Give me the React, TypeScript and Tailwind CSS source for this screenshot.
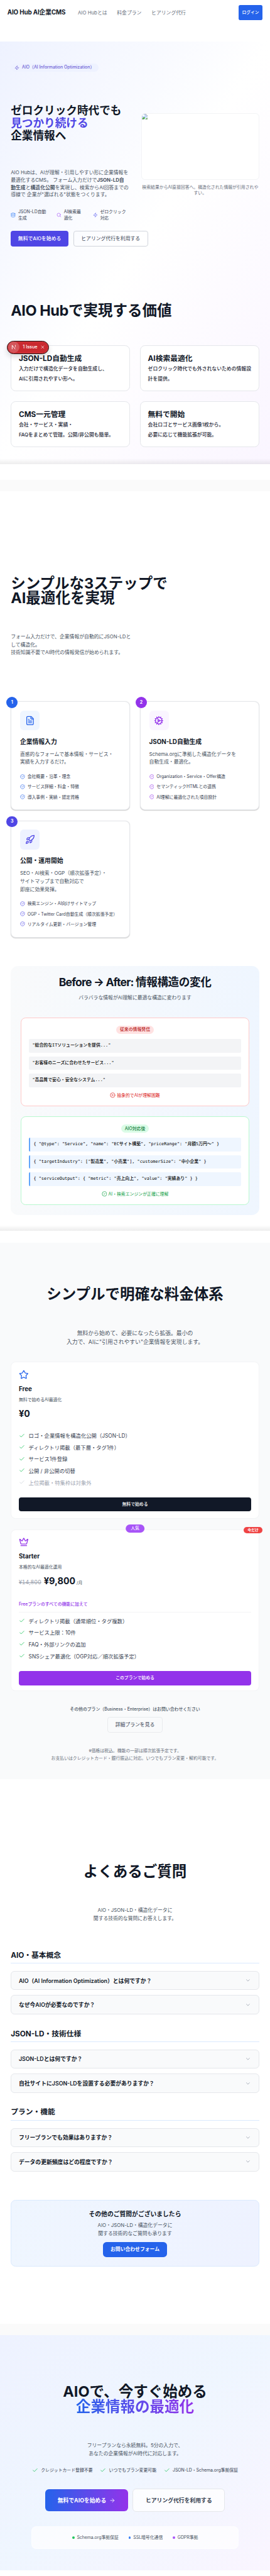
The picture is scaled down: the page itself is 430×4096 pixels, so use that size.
import type { ReactNode } from "react";
import {
  ArrowRight,
  Check,
  ChevronDown,
  CircleCheck,
  CircleCheckBig,
  CircleX,
  Cog,
  Crown,
  Database,
  FileText,
  Rocket,
  Search,
  Star,
  X,
  Zap,
} from "lucide-react";

// The site's palette, set once on the page root.
const palette = [
  "[--color-blue-400:#60a5fa] [--color-blue-500:#3b82f6] [--color-blue-600:#2563eb]",
  "[--color-indigo-500:#6366f1] [--color-indigo-600:#4f46e5]",
  "[--color-purple-500:#a855f7] [--color-purple-600:#9333ea]",
  "[--color-red-500:#ef4444] [--color-red-600:#dc2626] [--color-red-700:#b91c1c]",
  "[--color-green-500:#22c55e] [--color-green-600:#16a34a] [--color-green-700:#15803d]",
  "[--color-gray-400:#9ca3af] [--color-gray-500:#6b7280] [--color-gray-600:#4b5563]",
  "[--color-gray-700:#374151] [--color-gray-800:#1f2937] [--color-gray-900:#111827]",
].join(" ");

function Header() {
  return (
    <header className="flex h-[72px] items-center justify-between px-[21px]">
      <div className="flex items-center gap-[35px]">
        <span className="text-[17.5px] leading-7 font-bold tracking-[-0.2px] text-gray-900">AIO Hub AI企業CMS</span>
        <nav className="flex gap-8 pt-[1px] text-[14px] leading-5 text-gray-500">
          <a>AIO Hubとは</a>
          <a>料金プラン</a>
          <a>ヒアリング代行</a>
        </nav>
      </div>
      <button className="h-[44px] w-[69px] rounded-[5px] bg-blue-600 text-[12px] font-medium text-white">
        ログイン
      </button>
    </header>
  );
}

function BrokenImage() {
  return (
    <svg width="16" height="16" viewBox="0 0 16 16" className="block">
      <path d="M0.5 0.5H11L15.5 5V15.5H0.5Z" fill="#c3d7fb" />
      <path d="M2 6.5a1.7 1.7 0 0 1 .6-3.2 2 2 0 0 1 3.8 0A1.7 1.7 0 0 1 7 6.5Z" fill="#fff" />
      <path d="M1 15.5V14l5-5.5 3 3-4 4Z" fill="#4fae33" />
      <path d="M15.5 8 7.5 15.5h2L15.5 10.5Z" fill="#fff" />
      <path d="M9.5 15.5 15.5 10.5v5Z" fill="#4fae33" />
      <path d="M0.5 15.5V0.5H11L15.5 5v3M15.5 11v4.5H10M7 15.5H0.5" fill="none" stroke="#9aa0a6" />
      <path d="M11 0.5V5h4.5Z" fill="#fff" stroke="#9aa0a6" strokeWidth=".8" />
    </svg>
  );
}

const values: { title: string; lines: string[] }[] = [
  { title: "JSON-LD自動生成", lines: ["入力だけで構造化データを自動生成し、", "AIに引用されやすい形へ。"] },
  { title: "AI検索最適化", lines: ["ゼロクリック時代でも外されないための情報設", "計を提供。"] },
  { title: "CMS一元管理", lines: ["会社・サービス・実績・", "FAQをまとめて管理。公開/非公開も簡単。"] },
  { title: "無料で開始", lines: ["会社ロゴとサービス画像1枚から。", "必要に応じて機能拡張が可能。"] },
];

function IssueBadge() {
  return (
    <div className="absolute top-[849px] left-[19px] z-10 flex h-[38px] w-[120px] items-center rounded-full border border-[#1a0b0c] bg-[#ca2a30] pl-[2px] shadow-[inset_0_0_0_1px_#e5484d,0_8px_16px_rgba(0,0,0,0.14)]">
      <span className="flex size-[32px] items-center justify-center rounded-full bg-[#d4555a]">
        <svg width="14" height="14" viewBox="0 0 14 14" fill="none" strokeWidth="1.7">
          <defs>
            <linearGradient id="n-leg" x1="0" y1="0" x2="0" y2="1">
              <stop offset="0.3" stopColor="#fff" />
              <stop offset="1" stopColor="#fff" stopOpacity="0" />
            </linearGradient>
          </defs>
          <path d="M2.4 13V1.6L11.2 13" stroke="#fff" />
          <rect x="10.6" y="1" width="1.6" height="9" fill="url(#n-leg)" />
        </svg>
      </span>
      <span className="ml-[10px] text-[13px] leading-5 font-medium text-white">1 Issue</span>
      <X className="ml-[7px] size-[14px] text-white" strokeWidth={2} />
    </div>
  );
}

function Hero() {
  return (
    <section className="relative h-[1199px] bg-linear-to-br/srgb from-indigo-50 via-white to-purple-50 px-[4%] pt-[62px]">
      <div className="flex h-[24px] w-[249px] items-center gap-[8px] rounded-full bg-indigo-50 pl-[10px] text-[12.25px] font-medium whitespace-nowrap text-[#6d5fd6]">
        <Zap className="size-[14px] shrink-0" />
        <span>AIO（AI Information Optimization）</span>
      </div>

      <div className="mt-[93px] grid grid-cols-2 gap-[35px]">
        <div className="whitespace-nowrap">
          <h1 className="text-[31.5px] leading-[35.2px] font-bold text-gray-900">
            ゼロクリック時代でも
            <br />
            <span className="text-indigo-600">見つかり続ける</span>
            <br />
            企業情報へ
          </h1>
          <p className="mt-[78px] text-[14px] leading-[21px] text-gray-600">
            AIO Hubは、AIが理解・引用しやすい形に企業情報を
            <br />
            最適化するCMS。 フォーム入力だけで<strong>JSON-LD自</strong>
            <br />
            <strong>動生成</strong>と<strong>構造化公開</strong>を実現し、検索からAI回答までの
            <br />
            導線で 企業が"選ばれる"状態をつくります。
          </p>
          <div className="mt-[28px] flex h-[36px] text-[12.25px] leading-[18px] text-gray-700">
            <div className="flex w-[130px] items-center gap-[7px]">
              <Database className="size-[14px] text-blue-500" />
              <span>
                JSON-LD自動
                <br />
                生成
              </span>
            </div>
            <div className="flex w-[103px] items-center gap-[7px]">
              <Search className="size-[14px] text-purple-500" />
              <span>
                AI検索最
                <br />
                適化
              </span>
            </div>
            <div className="flex items-center gap-[7px]">
              <Zap className="size-[14px] text-indigo-500" />
              <span>
                ゼロクリック
                <br />
                対応
              </span>
            </div>
          </div>
          <div className="mt-[27px] flex gap-[14px] text-[14px]">
            <button className="h-[44px] w-[164px] shrink-0 rounded-[7px] bg-indigo-600 font-medium text-white">
              無料でAIOを始める
            </button>
            <button className="h-[44px] w-[212px] shrink-0 rounded-[7px] border border-gray-300 text-gray-700">
              ヒアリング代行を利用する
            </button>
          </div>
        </div>
        <div className="pt-[25px]">
          <div className="h-[189px] overflow-hidden rounded-[10.5px] border border-gray-100 bg-white">
            <BrokenImage />
          </div>
          <p className="mt-[11.5px] text-center text-[12.25px] leading-[17.5px] whitespace-nowrap text-gray-500">
            検索結果からAI直接回答へ。構造化された情報が引用されや
            <br />
            すい。
          </p>
        </div>
      </div>

      <h2 className="mt-[161px] text-[42px] leading-[42px] font-bold text-gray-900">
        <span className="tracking-[-0.8px]">AIO Hub</span>で実現する価値
      </h2>
      <div className="mt-[78px] grid grid-cols-2 gap-8">
        {values.map((v) => (
          <div key={v.title} className="h-[131px] rounded-[14px] border border-gray-200 bg-white px-[21px] pt-[21px]">
            <h3 className="text-[21px] leading-[30px] font-bold text-gray-900">{v.title}</h3>
            <p className="mt-[1px] text-[14px] leading-[28px] font-medium whitespace-nowrap text-gray-800">
              {v.lines[0]}
              <br />
              {v.lines[1]}
            </p>
          </div>
        ))}
      </div>
      <IssueBadge />
      <div className="absolute inset-x-0 bottom-0 h-[15px] bg-linear-to-b from-transparent to-black/7" />
    </section>
  );
}

type Step = {
  n: number;
  icon: ReactNode;
  title: string;
  body: string[];
  items: string[];
  badge: string;
  box: string;
  tint: string;
};

const steps: Step[] = [
  {
    n: 1,
    icon: <FileText className="size-8" />,
    title: "企業情報入力",
    body: ["直感的なフォームで基本情報・サービス・", "実績を入力するだけ。"],
    items: ["会社概要・沿革・理念", "サービス詳細・料金・特徴", "導入事例・実績・認定資格"],
    badge: "bg-blue-600",
    box: "bg-blue-50 text-blue-600",
    tint: "text-blue-600",
  },
  {
    n: 2,
    icon: <Cog className="size-8" />,
    title: "JSON-LD自動生成",
    body: ["Schema.orgに準拠した構造化データを", "自動生成・最適化。"],
    items: ["Organization・Service・Offer構造", "セマンティックHTMLとの連携", "AI理解に最適化された項目設計"],
    badge: "bg-purple-600",
    box: "bg-purple-50 text-purple-600",
    tint: "text-purple-600",
  },
  {
    n: 3,
    icon: <Rocket className="size-8" />,
    title: "公開・運用開始",
    body: ["SEO・AI検索・OGP（順次拡張予定）・", "サイトマップまで自動対応で", "即座に効果発揮。"],
    items: ["検索エンジン・AI向けサイトマップ", "OGP・Twitter Card自動生成（順次拡張予定）", "リアルタイム更新・バージョン管理"],
    badge: "bg-indigo-600",
    box: "bg-indigo-50 text-indigo-600",
    tint: "text-indigo-600",
  },
];

function StepCard({ step }: { step: Step }) {
  return (
    <div className="relative rounded-[14px] border border-gray-200 bg-white p-[24.5px] pb-[24px] shadow-sm">
      <span
        className={`absolute -top-[14px] -left-[14px] flex size-[31.5px] items-center justify-center rounded-full text-[12.25px] font-bold text-white ${step.badge}`}
      >
        {step.n}
      </span>
      <div className={`flex size-[56px] items-center justify-center rounded-[10.5px] ${step.box}`}>{step.icon}</div>
      <h3 className="mt-[19px] text-[17.5px] leading-[28px] font-bold text-gray-900">{step.title}</h3>
      <p className="mt-[9.5px] text-[14px] leading-[22.75px] whitespace-nowrap text-gray-600">
        {step.body.map((line) => (
          <span key={line} className="block">
            {line}
          </span>
        ))}
      </p>
      <ul className="mt-[19.5px] flex flex-col gap-[7px] text-[12.25px] leading-[22px] whitespace-nowrap text-gray-700">
        {step.items.map((item) => (
          <li key={item} className="flex items-center gap-[7px]">
            <CircleCheckBig className={`mb-[2px] size-[14px] ${step.tint}`} />
            {item}
          </li>
        ))}
      </ul>
    </div>
  );
}

const beforeRows = [
  '"総合的なITソリューションを提供..."',
  '"お客様のニーズに合わせたサービス..."',
  '"高品質で安心・安全なシステム..."',
];
const afterRows = [
  '{ "@type": "Service", "name": "ECサイト構築", "priceRange": "月額5万円〜" }',
  '{ "targetIndustry": ["製造業", "小売業"], "customerSize": "中小企業" }',
  '{ "serviceOutput": { "metric": "売上向上", "value": "実績あり" } }',
];

const mono = "font-['DejaVu_Sans_Mono','Noto_Sans_CJK_JP',monospace]";

function Steps() {
  return (
    <section className="relative h-[2100px] bg-white px-[4%] pt-[241px]">
      <h2 className="text-[42px] leading-[42.2px] font-bold whitespace-nowrap text-gray-900">
        シンプルな3ステップで
        <br />
        AI最適化を実現
      </h2>
      <p className="mt-[77px] text-[14px] leading-[22.6px] text-gray-600">
        フォーム入力だけで、企業情報が自動的にJSON-LDと
        <br />
        して構造化。
        <br />
        技術知識不要でAI時代の情報発信が始められます。
      </p>
      <div className="mt-[127px] grid grid-cols-2 gap-x-8 gap-y-[29px]">
        {steps.map((s) => (
          <StepCard key={s.n} step={s} />
        ))}
      </div>

      <div className="mt-[81px] h-[708px] rounded-[21px] bg-linear-to-r/srgb from-gray-50 to-blue-50 px-[28px] pt-[25px]">
        <h3 className="text-center text-[31.5px] leading-[42px] font-bold tracking-[-0.8px] text-gray-900">
          <span className="tracking-[-1.45px]">Before → After: </span>情報構造の変化
        </h3>
        <p className="mt-[12.5px] text-center text-[14px] leading-[22px] text-gray-600">
          バラバラな情報がAI理解に最適な構造に変わります
        </p>
        <div className="mt-[45.5px] flex h-[252px] flex-col items-center rounded-[14px] border-2 border-red-200 bg-white px-[21px] pt-[21px]">
          <span className="h-[24px] rounded-full bg-red-100 px-[10.5px] text-[12.25px] leading-[23px] font-medium text-red-700">
            従来の情報発信
          </span>
          <div className={`mt-[14px] flex w-full flex-col gap-[10.5px] text-[12.25px] font-medium text-black ${mono}`}>
            {beforeRows.map((r) => (
              <div key={r} className="h-[38.5px] rounded-[3.5px] bg-gray-100 px-[10.5px] leading-[37px]">
                {r}
              </div>
            ))}
          </div>
          <p className="mt-[13px] flex items-center gap-[4px] text-[12.25px] leading-[20px] text-red-600">
            <CircleX className="size-[15.5px]" />
            抽象的でAIが理解困難
          </p>
        </div>
        <div className="mt-[28px] flex h-[252.5px] flex-col items-center rounded-[14px] border-2 border-green-200 bg-white px-[21px] pt-[21px]">
          <span className="h-[24.5px] rounded-full bg-green-100 px-[10.5px] text-[12.25px] leading-[24px] font-medium text-green-700">
            AIO対応後
          </span>
          <div
            className={`mt-[14px] flex w-full flex-col gap-[10.5px] text-[12.25px] font-medium whitespace-pre text-black ${mono}`}
          >
            {afterRows.map((r) => (
              <div
                key={r}
                className="h-[38.5px] rounded-[3.5px] border-l-4 border-blue-400 bg-blue-50 px-[10.5px] leading-[36px]"
              >
                {r}
              </div>
            ))}
          </div>
          <p className="mt-[12.5px] flex items-center gap-[4px] text-[12.25px] leading-[20px] text-green-600">
            <CircleCheck className="size-[15.5px]" />
            AI・検索エンジンが正確に理解
          </p>
        </div>
      </div>
      <div className="absolute inset-x-0 bottom-0 h-[15px] bg-linear-to-b from-transparent to-black/7" />
    </section>
  );
}

function Feature({ text, off = false }: { text: string; off?: boolean }) {
  return (
    <li className={off ? "flex items-center gap-[10.5px] text-gray-400" : "flex items-center gap-[10.5px] text-gray-700"}>
      <Check className={off ? "mb-[5px] size-[17.5px] text-gray-300" : "mb-[5px] size-[17.5px] text-green-500"} />
      {text}
    </li>
  );
}

function Pricing() {
  return (
    <section className="h-[1522.7px] bg-gray-50 px-[4%] pt-[125px] text-center">
      <h2 className="text-[42px] leading-[42px] font-bold text-gray-900">シンプルで明確な料金体系</h2>
      <p className="mt-[78px] text-[15.75px] leading-[25px] text-gray-600">
        無料から始めて、必要になったら拡張。最小の
        <br />
        入力で、AIに"引用されやすい"企業情報を実現します。
      </p>

      <div className="mt-[42px] h-[447px] rounded-[14px] border border-gray-100 bg-white px-[21px] pt-[21.5px] text-left">
        <Star className="size-8 text-blue-600" />
        <h3 className="mt-[13.5px] text-[17.5px] leading-[28px] font-bold text-gray-900">Free</h3>
        <p className="mt-[7.5px] text-[12.25px] leading-[18px] text-gray-600">無料で始めるAI最適化</p>
        <p className="mt-[15.5px] text-[26.25px] leading-[32px] font-bold text-gray-900 tabular-nums">¥0</p>
        <ul className="mt-[35px] flex flex-col gap-[9.3px] text-[14.9px] leading-[24px]">
          <Feature text="ロゴ・企業情報を構造化公開（JSON-LD）" />
          <Feature text="ディレクトリ掲載（最下層・タグ1件）" />
          <Feature text="サービス1件登録" />
          <Feature text="公開 / 非公開の切替" />
          <Feature text="上位掲載・特集枠は対象外" off />
        </ul>
        <button className="mt-[28px] h-[40px] w-full rounded-[7px] bg-gray-900 text-[12.25px] font-medium text-white">
          無料で始める
        </button>
      </div>

      <div className="relative mt-[29.5px] h-[460px] rounded-[14px] border border-gray-100 bg-white px-[21px] pt-[20px] text-left">
        <span className="absolute -top-[14.5px] left-1/2 h-[22px] w-[53px] -translate-x-1/2 rounded-full bg-purple-500 text-center text-[12.25px] leading-[22px] font-medium text-white">
          人気
        </span>
        <span className="absolute -top-[8.5px] -right-[11px] h-[19px] w-[53px] rounded-full bg-red-500 text-center text-[10.5px] leading-[19px] font-bold text-white">
          今だけ
        </span>
        <Crown className="size-8 text-purple-600" />
        <h3 className="mt-[14px] text-[17.5px] leading-[28px] font-bold text-gray-900">Starter</h3>
        <p className="mt-[7.5px] text-[12.25px] leading-[18px] text-gray-600">本格的なAI最適化運用</p>
        <p className="mt-[15.5px] flex items-baseline text-[26.25px] leading-[32px] font-bold text-gray-900 tabular-nums">
          <span className="mr-[7px] text-[15.75px] font-normal text-gray-400 line-through">¥14,800</span>
          ¥9,800
          <span className="ml-[3.5px] text-[12.25px] font-normal text-gray-600">/月</span>
        </p>
        <p className="mt-[36.5px] text-[12.25px] leading-[18px] font-medium text-purple-600">
          Freeプランのすべての機能に加えて
        </p>
        <hr className="mt-[12px] border-gray-100" />
        <ul className="mt-[13.5px] flex flex-col gap-[9.4px] text-[14.9px] leading-[24px]">
          <Feature text="ディレクトリ掲載（通常順位・タグ複数）" />
          <Feature text="サービス上限：10件" />
          <Feature text="FAQ・外部リンクの追加" />
          <Feature text="SNSシェア最適化（OGP対応／順次拡張予定）" />
        </ul>
        <button className="mt-[28px] h-[41px] w-full rounded-[7px] bg-purple-600 text-[12.25px] font-medium text-white">
          このプランで始める
        </button>
      </div>

      <p className="mt-[41px] text-[12.25px] leading-[20px] font-medium text-gray-600">
        その他のプラン（Business・Enterprise）はお問い合わせください
      </p>
      <button className="mt-[12.5px] h-[44px] w-[156px] rounded-[7px] border border-gray-200/80 text-[14px] text-gray-700">
        詳細プランを見る
      </button>
      <p className="mt-[41.5px] text-[12.25px] leading-[22px] text-gray-500">
        ※価格は税込。機能の一部は順次拡張予定です。
        <br />
        お支払いはクレジットカード・銀行振込に対応。いつでもプラン変更・解約可能です。
      </p>
    </section>
  );
}

const faq: { title: string; items: string[] }[] = [
  { title: "AIO・基本概念", items: ["AIO（AI Information Optimization）とは何ですか？", "なぜ今AIOが必要なのですか？"] },
  { title: "JSON-LD・技術仕様", items: ["JSON-LDとは何ですか？", "自社サイトにJSON-LDを設置する必要がありますか？"] },
  { title: "プラン・機能", items: ["フリープランでも効果はありますか？", "データの更新頻度はどの程度ですか？"] },
];

function Faq() {
  return (
    <section className="h-[1547.6px] bg-white px-[4%] pt-[242px]">
      <h2 className="text-center text-[42px] leading-[42px] font-bold text-gray-900">よくあるご質問</h2>
      <p className="mt-[78px] text-center text-[14px] leading-[22px] text-gray-600">
        AIO・JSON-LD・構造化データに
        <br />
        関する技術的な質問にお答えします。
      </p>
      <div className="mt-[81.5px] flex flex-col gap-[42.2px]">
        {faq.map((c) => (
          <div key={c.title} className="h-[180.8px]">
            <h3 className="border-b-2 border-blue-100 pb-[6.5px] text-[21px] leading-[28px] font-bold text-gray-900">
              {c.title}
            </h3>
            <div className="mt-[21.5px] flex flex-col gap-[14.2px]">
              {c.items.map((q) => (
                <div
                  key={q}
                  className="flex h-[54.3px] items-center justify-between rounded-[10.5px] border border-gray-200 bg-gray-50 px-[21px] text-[15.75px] font-semibold text-gray-900"
                >
                  {q}
                  <ChevronDown className="size-[17.5px] text-gray-400" />
                </div>
              ))}
            </div>
          </div>
        ))}
      </div>
      <div className="mt-[81px] flex h-[189px] flex-col items-center rounded-[14px] border border-blue-100 bg-linear-to-r/srgb from-blue-50 to-indigo-50 pt-[26.5px] text-center">
        <h3 className="text-[17.5px] leading-[25px] font-bold text-gray-900">その他のご質問がございましたら</h3>
        <p className="mt-[7.5px] text-[14px] leading-[22.5px] text-gray-600">
          AIO・JSON-LD・構造化データに
          <br />
          関する技術的なご質問も承ります
        </p>
        <button className="mt-[14px] h-[42px] w-[182px] rounded-[10px] bg-blue-600 text-[14px] font-bold text-white">
          お問い合わせフォーム
        </button>
      </div>
    </section>
  );
}

function Cta() {
  return (
    <section className="flex h-[668px] flex-col items-center bg-linear-to-br/srgb from-indigo-50 via-blue-50 to-purple-50 pt-[140px] text-center whitespace-nowrap">
      <h2 className="text-[42px] leading-[42px] font-bold text-gray-900">
        AIOで、今すぐ始める
        <br />
        <span className="bg-linear-to-r/srgb from-blue-600 to-purple-600 bg-clip-text text-transparent">
          企業情報の最適化
        </span>
      </h2>
      <p className="mt-[79px] text-[14px] leading-[22px] text-gray-600">
        フリープランなら永続無料。5分の入力で、
        <br />
        あなたの企業情報がAI時代に対応します。
      </p>
      <div className="mt-[27.5px] flex gap-[21px] text-[12.25px] leading-[20px] text-gray-700">
        {["クレジットカード登録不要", "いつでもプラン変更可能", "JSON-LD・Schema.org準拠保証"].map((t) => (
          <span key={t} className="flex items-center gap-[8px]">
            <Check className="size-[17.5px] text-green-500" />
            {t}
          </span>
        ))}
      </div>
      <div className="mt-[42.5px] flex items-center gap-[14px] text-[15.75px] font-bold">
        <button className="flex h-[63px] w-[235.5px] items-center justify-center gap-[8px] rounded-[10.5px] bg-linear-to-r/srgb from-blue-600 to-purple-600 text-white">
          無料でAIOを始める
          <ArrowRight className="size-[17.5px]" />
        </button>
        <button className="h-[64.5px] w-[262.5px] rounded-[10.5px] border-2 border-gray-200 bg-white/80 text-gray-700">
          ヒアリング代行を利用する
        </button>
      </div>
      <div className="mt-[42px] flex h-[65px] w-[588px] items-center justify-center gap-[28px] rounded-[14px] border border-white/50 bg-white/70 text-[12.25px] text-gray-600">
        <span className="flex items-center gap-[7px]">
          <i className="size-[7px] rounded-full bg-green-500" />
          Schema.org準拠保証
        </span>
        <span className="flex items-center gap-[7px]">
          <i className="size-[7px] rounded-full bg-blue-500" />
          SSL暗号化通信
        </span>
        <span className="flex items-center gap-[7px]">
          <i className="size-[7px] rounded-full bg-purple-500" />
          GDPR準拠
        </span>
      </div>
    </section>
  );
}

export default function App() {
  return (
    <div
      className={`h-[7314px] w-full overflow-hidden bg-white font-['Inter','Noto_Sans_CJK_JP',sans-serif] [--spacing:3.5px] [zoom:0.56] ${palette}`}
    >
      <Header />
      <div className="h-[46px]" />
      <Hero />
      <div className="h-[46px]" />
      <div className="h-[31px] bg-[#fafafa]" />
      <Steps />
      <div className="h-[34.7px]" />
      <Pricing />
      <Faq />
      <div className="h-[31px] bg-[#fafafa]" />
      <Cta />
    </div>
  );
}
